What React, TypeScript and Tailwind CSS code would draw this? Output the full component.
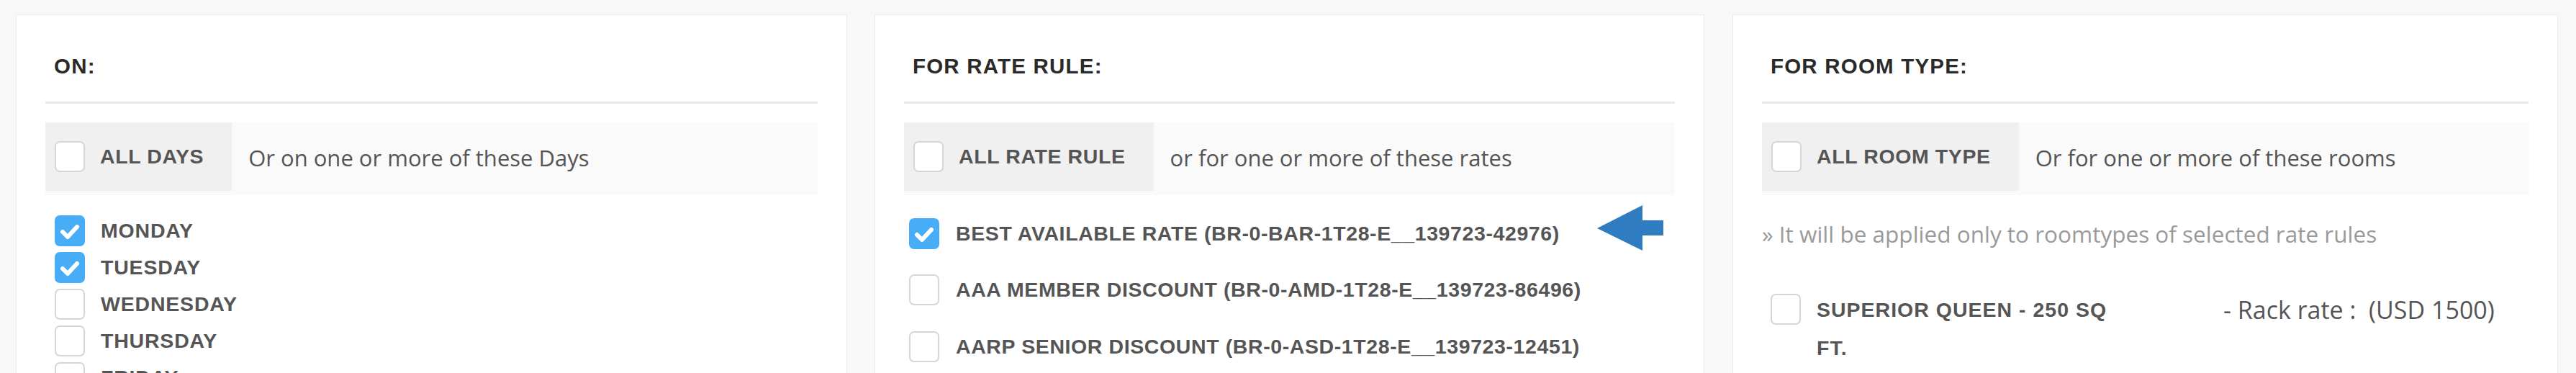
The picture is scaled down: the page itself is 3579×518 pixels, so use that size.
import React from 'react';

const boldFont = "font-['Liberation_Sans',Arial,sans-serif]";
const textFont = "font-['Open_Sans',sans-serif]";

function Box({ checked = false }: { checked?: boolean }) {
  if (checked) {
    return (
      <span className="w-[42px] h-[43px] shrink-0 rounded-[7px] bg-[#47adf6] flex items-center justify-center">
        <svg width="42" height="43" viewBox="0 0 42 43">
          <polyline
            points="11,23 18,30 31,16"
            fill="none"
            stroke="white"
            strokeWidth="6"
            strokeLinecap="round"
            strokeLinejoin="round"
          />
        </svg>
      </span>
    );
  }
  return <span className="block w-[42px] h-[43px] shrink-0 rounded-[7px] bg-white border-2 border-[#d6d6d6]" />;
}

function Heading({ children }: { children: React.ReactNode }) {
  return (
    <>
      <h3 className={`${boldFont} text-[29.5px] font-bold leading-[40px] tracking-[1.2px] pl-[12px] text-[#2a2a2a]`}>
        {children}
      </h3>
      <div className="mt-[29px] h-[3px] bg-[#e9e9e9]" />
    </>
  );
}

function AllRow({ label, hint }: { label: string; hint: string }) {
  return (
    <div className="mt-[26px] flex items-start bg-[#fafafa] pb-[6px]">
      <div className="h-[95px] flex items-center gap-[21px] bg-[#f0f0f0] pl-[13px] pr-[39px]">
        <Box />
        <span className={`${boldFont} text-[28.5px] font-bold tracking-[0.6px] text-[#555]`}>{label}</span>
      </div>
      <div className={`${textFont} h-[95px] flex items-center pl-[23px] pt-[4px] text-[31px] text-[#555]`}>
        {hint}
      </div>
    </div>
  );
}

const days = [
  { name: 'MONDAY', checked: true },
  { name: 'TUESDAY', checked: true },
  { name: 'WEDNESDAY', checked: false },
  { name: 'THURSDAY', checked: false },
  { name: 'FRIDAY', checked: false },
  { name: 'SATURDAY', checked: false },
  { name: 'SUNDAY', checked: false },
];

const rates = [
  { name: 'BEST AVAILABLE RATE (BR-0-BAR-1T28-E__139723-42976)', checked: true },
  { name: 'AAA MEMBER DISCOUNT (BR-0-AMD-1T28-E__139723-86496)', checked: false },
  { name: 'AARP SENIOR DISCOUNT (BR-0-ASD-1T28-E__139723-12451)', checked: false },
];

export default function App() {
  return (
    <div className="min-h-screen bg-[#f8f8f8] pt-5 pl-[22px] flex items-start">
      {/* On days */}
      <div className="w-[1155px] min-h-[600px] bg-white border border-[#ececec] px-10 pt-[51px]">
        <Heading>ON:</Heading>
        <AllRow label="ALL DAYS" hint="Or on one or more of these Days" />
        <div className="mt-[28px] flex flex-col gap-[8px] pl-[13px]">
          {days.map((d) => (
            <div key={d.name} className="h-[43px] flex items-center gap-[22px]">
              <Box checked={d.checked} />
              <span className={`${boldFont} text-[28.5px] font-bold tracking-[0.8px] text-[#555]`}>{d.name}</span>
            </div>
          ))}
        </div>
      </div>

      {/* Rate rules */}
      <div className="ml-[38px] w-[1153px] min-h-[600px] bg-white border border-[#ececec] px-10 pt-[51px]">
        <Heading>FOR RATE RULE:</Heading>
        <AllRow label="ALL RATE RULE" hint="or for one or more of these rates" />
        <div className="mt-[31px] flex flex-col gap-[34.5px] pl-[7px]">
          {rates.map((r, i) => (
            <div key={r.name} className="relative h-[44px] flex items-center gap-[23px]">
              <Box checked={r.checked} />
              <span className={`${boldFont} text-[28.5px] font-bold tracking-[0.6px] text-[#555]`}>{r.name}</span>
              {i === 0 && (
                <svg className="absolute left-[956px] top-[-17px]" width="92" height="63" viewBox="0 0 92 63">
                  <path d="M0 32 L63 0 L63 21 L92 21 L92 42 L63 42 L63 63 Z" fill="#2f7dc0" />
                </svg>
              )}
            </div>
          ))}
        </div>
      </div>

      {/* Room types */}
      <div className="ml-[39px] w-[1147px] min-h-[600px] bg-white border border-[#ececec] px-10 pt-[51px]">
        <Heading>FOR ROOM TYPE:</Heading>
        <AllRow label="ALL ROOM TYPE" hint="Or for one or more of these rooms" />
        <p className={`${textFont} mt-[33px] text-[31.5px] leading-[42px] text-[#9a9a9a]`}>
          » It will be applied only to roomtypes of selected rate rules
        </p>
        <div className="mt-[58px] flex items-start pl-[12px]">
          <div className="mt-[4px]">
            <Box />
          </div>
          <span className={`${boldFont} ml-[22px] w-[430px] text-[28.5px] font-bold leading-[53px] tracking-[1px] text-[#555]`}>
            SUPERIOR QUEEN - 250 SQ FT.
          </span>
          <span className={`${textFont} ml-[135px] text-[34px] leading-[53px] text-[#555]`}>
            - Rack rate :&nbsp; (USD 1500)
          </span>
        </div>
      </div>
    </div>
  );
}
